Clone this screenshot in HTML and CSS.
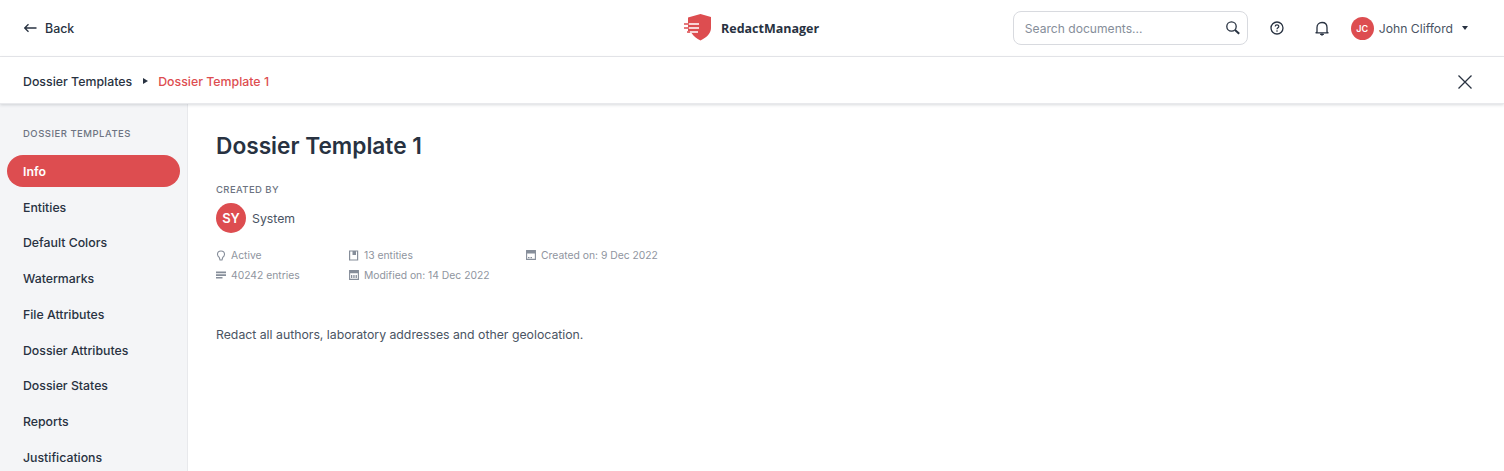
FILE: index.html
```html
<!DOCTYPE html>
<html lang="en">
<head>
<meta charset="utf-8">
<title>RedactManager</title>
<link rel="stylesheet" href="styles.css">
</head>
<body>
<header class="topbar">
  <a class="back">
    <svg class="back-icon" width="13" height="10" viewBox="0 0 13 10"><path d="M12.500 5H1M4.500 1.200 .7 5l3.800 3.800" fill="none" stroke="#283241" stroke-width="1.300"/></svg>
    <span>Back</span>
  </a>
  <div class="brand">
    <svg class="logo" width="29" height="29" viewBox="0 0 29 29">
      <path d="M5 4.500 17.500 1 28 4v11c0 5.500-4.500 9.500-10.500 12.500-3.800-1.900-7-4.300-9-7.500H5z" fill="#dd4d50"/>
      <path d="M1 11h15M1 15h15M4 19h11" stroke="#fff" stroke-width="1.500"/>
      <path d="M1 11h5M1 15h5M4 19h3" stroke="#dd4d50" stroke-width="1.500"/>
    </svg>
    <span class="brand-name">RedactManager</span>
  </div>
  <div class="top-actions">
    <div class="search">
      <span class="search-text">Search documents...</span>
      <svg width="16" height="16" viewBox="0 0 16 16"><circle cx="6.500" cy="6.500" r="4.700" fill="none" stroke="#283241" stroke-width="1.300"/><path d="M10 10l4.200 3.700" stroke="#283241" stroke-width="2"/></svg>
    </div>
    <svg class="help" width="14" height="14" viewBox="0 0 14 14"><circle cx="7" cy="7" r="6" fill="none" stroke="#283241" stroke-width="1.300"/><path d="M5.200 5.600C5.200 3.300 8.800 3.300 8.800 5.500 8.800 6.800 7 6.800 7 8.300" fill="none" stroke="#283241" stroke-width="1.200"/><circle cx="7" cy="10" r=".8" fill="#283241"/></svg>
    <svg class="bell" width="14" height="15" viewBox="0 0 14 15"><path d="M2 11V6.500C2 3.500 4 1.500 7 1.500s5 2 5 5V11l1 .8H1z" fill="none" stroke="#283241" stroke-width="1.300" stroke-linejoin="round"/><path d="M5.500 13h3v.5C8 14.300 6 14.300 5.500 13.500z" fill="#283241" stroke="#283241"/></svg>
    <div class="user">
      <span class="avatar avatar-small">JC</span>
      <span class="user-name">John Clifford</span>
      <span class="caret"></span>
    </div>
  </div>
</header>
<nav class="crumbs">
  <div class="crumb-list">
    <span class="crumb">Dossier Templates</span>
    <span class="crumb-arrow"></span>
    <span class="crumb crumb-active">Dossier Template 1</span>
  </div>
  <svg width="16" height="16" viewBox="0 0 16 16"><path d="M1.500 1.500l13 13M14.500 1.500l-13 13" stroke="#283241" stroke-width="1.300"/></svg>
</nav>
<div class="layout">
  <aside class="sidebar">
    <div class="side-title">DOSSIER TEMPLATES</div>
    <a class="side-item side-item-active">Info</a>
    <a class="side-item">Entities</a>
    <a class="side-item">Default Colors</a>
    <a class="side-item">Watermarks</a>
    <a class="side-item">File Attributes</a>
    <a class="side-item">Dossier Attributes</a>
    <a class="side-item">Dossier States</a>
    <a class="side-item">Reports</a>
    <a class="side-item">Justifications</a>
  </aside>
  <main class="content">
    <h1 class="title">Dossier Template 1</h1>
    <div class="label">CREATED BY</div>
    <div class="creator">
      <span class="avatar avatar-large">SY</span>
      <span>System</span>
    </div>
    <div class="stats">
      <div class="stat">
        <svg width="10" height="11" viewBox="0 0 10 11"><path d="M3.300 7.500C2.200 6.700 1.500 5.700 1.500 4.300 1.500 2.400 3 1 5 1s3.500 1.400 3.500 3.300c0 1.400-.7 2.400-1.800 3.200L6 10H4z" fill="none" stroke="#868e9a" stroke-width="1.100"/></svg>
        <span>Active</span>
      </div>
      <div class="stat">
        <svg width="10" height="11" viewBox="0 0 10 11"><path d="M.6 1h8v9h-8z" fill="none" stroke="#868e9a" stroke-width="1.200"/><path d="M3.500 1H7v4H3.500z" fill="#868e9a"/></svg>
        <span>13 entities</span>
      </div>
      <div class="stat">
        <svg width="10" height="10" viewBox="0 0 10 10"><path d="M.6.600h8.800v8.800H.6z" fill="none" stroke="#868e9a" stroke-width="1.100"/><path d="M.6 1h8.800v2.500H.6zM2 7h1.500v1.300H2zM4.500 7H6v1.300H4.500z" fill="#868e9a"/></svg>
        <span>Created on: 9 Dec 2022</span>
      </div>
      <div class="stat">
        <svg width="10" height="8" viewBox="0 0 10 8"><path d="M0 .5h10v1.700H0zM0 3.200h10v1.700H0zM0 5.900h6.500v1.700H0z" fill="#868e9a"/></svg>
        <span>40242 entries</span>
      </div>
      <div class="stat">
        <svg width="10" height="10" viewBox="0 0 10 10"><path d="M.6.600h8.800v8.800H.6z" fill="none" stroke="#868e9a" stroke-width="1.100"/><path d="M.6 1h8.800v2.200H.6zM2 5h1.300v3H2zM4.300 5h1.300v3H4.300zM6.600 5h1.300v3H6.600z" fill="#868e9a"/></svg>
        <span>Modified on: 14 Dec 2022</span>
      </div>
    </div>
    <p class="description">Redact all authors, laboratory addresses and other geolocation.</p>
  </main>
</div>
</body>
</html>
```
FILE: styles.css
```css
* { box-sizing: border-box; }
html, body { height: 100%; }
body {
  margin: 0;
  overflow: hidden;
  display: flex;
  flex-direction: column;
  font-family: Inter, "Liberation Sans", sans-serif;
  font-size: 12.3px;
  color: #283241;
  background: #fff;
}
.topbar {
  height: 57px;
  flex: none;
  position: relative;
  display: flex;
  align-items: center;
  justify-content: space-between;
  padding: 0 36px 0 24px;
  border-bottom: 1px solid #e8e9ec;
}
.back { display: flex; align-items: center; gap: 8px; font-weight: 500; font-size: 12.400px; }
.brand {
  position: absolute;
  left: 683px;
  top: 13px;
  display: flex;
  align-items: center;
  gap: 9px;
}
.logo { display: block; }
.brand-name { padding-top: 2px; font-family: "Open Sans", sans-serif; font-weight: 700; font-size: 12.500px; }
.top-actions { display: flex; align-items: center; }
.search {
  width: 235px;
  height: 34px;
  display: flex;
  align-items: center;
  justify-content: space-between;
  padding: 0 6px 0 11px;
  border: 1px solid #d8dadf;
  border-radius: 8px;
}
.search-text { color: #868e9a; font-size: 12.100px; }
.help { margin-left: 22px; }
.bell { margin-left: 31px; }
.user { display: flex; align-items: center; margin-left: 22px; }
.avatar {
  display: flex;
  align-items: center;
  justify-content: center;
  border-radius: 50%;
  background: #dd4d50;
  color: #fff;
  font-weight: 600;
}
.avatar-small { width: 23px; height: 23px; font-size: 9px; }
.avatar-large { width: 30px; height: 30px; font-size: 13px; }
.user-name { margin-left: 5px; color: #4a5463; font-size: 12.200px; }
.caret {
  margin-left: 9px;
  width: 0;
  height: 0;
  border-left: 3.500px solid transparent;
  border-right: 3.500px solid transparent;
  border-top: 4px solid #283241;
}
.crumbs {
  height: 47px;
  flex: none;
  display: flex;
  align-items: center;
  justify-content: space-between;
  padding: 3px 31px 0 23px;
  position: relative;
  box-shadow: 0 1px 3px rgba(40, 50, 65, .18);
  border-bottom: 1px solid #e8e9ec;
  z-index: 1;
}
.crumb-list { display: flex; align-items: center; }
.crumb { font-weight: 450; font-size: 12.350px; }
.crumb-active { color: #dd4d50; }
.crumb-arrow {
  margin: 0 10px 1px 11px;
  width: 0;
  height: 0;
  border-top: 3.500px solid transparent;
  border-bottom: 3.500px solid transparent;
  border-left: 5px solid #283241;
}
.layout { flex: 1; display: flex; min-height: 0; }
.sidebar {
  width: 188px;
  flex: none;
  padding: 24px 7px 0;
  background: #f4f5f7;
  border-right: 1px solid #e8e9ec;
}
.side-title {
  padding-left: 16px;
  height: 27px;
  font-size: 9.500px;
  font-weight: 500;
  letter-spacing: .5px;
  color: #6d7482;
}
.side-item {
  display: flex;
  align-items: center;
  height: 32px;
  margin-bottom: 3.750px;
  padding-left: 16px;
  border-radius: 16px;
  font-weight: 450;
  font-size: 12.300px;
  white-space: nowrap;
}
.side-item-active { margin-bottom: 4px; background: #dd4d50; color: #fff; font-weight: 600; }
.content { flex: 1; padding: 27px 28px; }
.title { margin: 0 0 23px; font-size: 22.700px; line-height: 30px; font-weight: 600; }
.label { font-size: 9.500px; font-weight: 500; letter-spacing: .4px; color: #6d7482; line-height: 12px; }
.creator { display: flex; align-items: center; gap: 6px; margin-top: 7px; color: #4a5463; }
.stats {
  display: grid;
  grid-template-columns: 133px 177px max-content;
  row-gap: 6px;
  margin-top: 15px;
  font-size: 10.330px;
  line-height: 14px;
  color: #8f95a0;
}
.stat { display: flex; align-items: center; gap: 5px; }
.description { margin: 45px 0 0; line-height: 16px; color: #4a5463; font-size: 12.270px; }
```
